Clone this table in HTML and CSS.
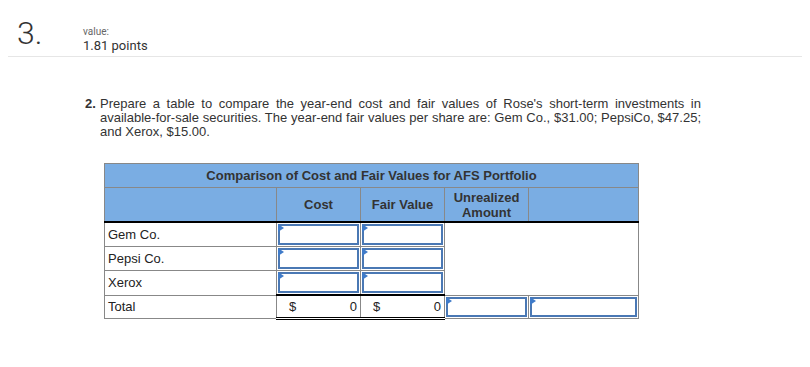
FILE: index.html
```html
<!DOCTYPE html>
<html>
<head>
<meta charset="utf-8">
<link rel="stylesheet" href="styles.css">
</head>
<body>
<div class="top">
  <div class="qnum">3.</div>
  <div class="val">
    <div class="val-label">value:</div>
    <div class="val-points">1.81 points</div>
  </div>
</div>
<div class="question">
  <div class="q-no">2.</div>
  <div class="q-text">Prepare a table to compare the year-end cost and fair values of Rose's short-term investments in available-for-sale securities. The year-end fair values per share are: Gem Co., $31.00; PepsiCo, $47.25; and Xerox, $15.00.</div>
</div>
<table class="afs">
  <colgroup>
    <col class="c-label"><col class="c-num"><col class="c-num"><col class="c-num"><col class="c-last">
  </colgroup>
  <tr class="title-row"><th colspan="5">Comparison of Cost and Fair Values for AFS Portfolio</th></tr>
  <tr class="head-row"><th></th><th>Cost</th><th>Fair Value</th><th>Unrealized<br>Amount</th><th></th></tr>
  <tr class="data-row">
    <td class="lbl">Gem Co.</td>
    <td class="inp"><div class="box"><span class="tri"></span></div></td>
    <td class="inp"><div class="box"><span class="tri"></span></div></td>
    <td class="blank" colspan="2" rowspan="3"></td>
  </tr>
  <tr class="data-row">
    <td class="lbl">Pepsi Co.</td>
    <td class="inp"><div class="box"><span class="tri"></span></div></td>
    <td class="inp"><div class="box"><span class="tri"></span></div></td>
  </tr>
  <tr class="data-row">
    <td class="lbl">Xerox</td>
    <td class="inp"><div class="box"><span class="tri"></span></div></td>
    <td class="inp"><div class="box"><span class="tri"></span></div></td>
  </tr>
  <tr class="data-row total-row">
    <td class="lbl">Total</td>
    <td class="sum"><div class="sumbox"><span>$</span><span>0</span></div></td>
    <td class="sum"><div class="sumbox"><span>$</span><span>0</span></div></td>
    <td class="inp"><div class="box"><span class="tri"></span></div></td>
    <td class="inp"><div class="box"><span class="tri"></span></div></td>
  </tr>
</table>
</body>
</html>
```
FILE: styles.css
```css
html, body {
  margin: 0;
  padding: 0;
  background: #fff;
}
body {
  font-family: "Liberation Sans", Arial, sans-serif;
  color: #333;
}
.top {
  display: flex;
  align-items: flex-start;
  margin: 0 8px;
  padding: 17px 0 0 9px;
  height: 39px;
  border-bottom: 1px solid #e6e6e6;
}
.qnum {
  font-family: Roboto, sans-serif;
  font-weight: 300;
  font-size: 32px;
  line-height: 32px;
  width: 66px;
  color: #333;
}
.val {
  padding-top: 9px;
}
.val-label {
  font-family: Roboto, sans-serif;
  font-size: 10px;
  line-height: 12px;
  color: #666;
}
.val-points {
  font-family: Roboto, sans-serif;
  font-size: 13px;
  line-height: 16px;
  color: #333;
}
.question {
  display: flex;
  margin: 40px 0 0 85px;
  width: 616px;
  font-size: 13px;
  line-height: 14px;
  color: #333;
}
.q-no {
  width: 15px;
  flex: none;
  font-weight: bold;
}
.q-text {
  text-align: justify;
}
.afs {
  margin: 24px 0 0 104px;
  border-collapse: collapse;
  table-layout: fixed;
  width: 534px;
  font-size: 13px;
  color: #222;
}
.c-label { width: 172px; }
.c-num { width: 84px; }
.c-last { width: 110px; }
.afs th {
  background: #7aade3;
  border: 1px solid #888;
  font-weight: bold;
  color: #333;
  padding: 0;
}
.title-row th {
  height: 23px;
  font-size: 13px;
}
.head-row th {
  height: 33px;
  line-height: 15px;
  font-size: 13px;
  border-bottom: 2px solid #000;
}
.afs td {
  border: 1px solid #888;
  padding: 0;
  height: 23px;
}
.afs td.lbl {
  padding-left: 3px;
}
.afs .total-row td {
  height: 20px;
}
.box {
  position: relative;
  box-sizing: border-box;
  height: 21px;
  margin: 1px;
  border: 2px solid #4a78b4;
  background: #fff;
}
.total-row .box {
  height: 20px;
}
.tri {
  position: absolute;
  left: -2px;
  top: -2px;
  width: 0;
  height: 0;
  border-top: 4px solid transparent;
  border-bottom: 4px solid transparent;
  border-left: 6px solid #3f7bc9;
}
.blank {
  background: #fff;
}
.afs .total-row .sum {
  border-top: 2px solid #000;
  border-bottom: 3px double #000;
  vertical-align: middle;
}
.sumbox {
  display: flex;
  justify-content: space-between;
  padding: 0 3px 0 12px;
}
```
